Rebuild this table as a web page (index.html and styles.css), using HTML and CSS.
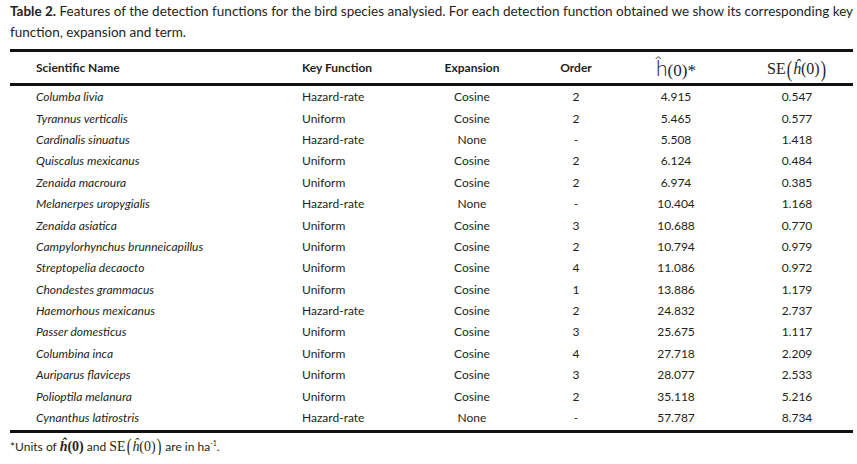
FILE: index.html
```html
<!DOCTYPE html>
<html>
<head>
<meta charset="utf-8">
<link rel="stylesheet" href="styles.css">
</head>
<body>
<div class="page">
  <p class="caption"><b>Table 2.</b> Features of the detection functions for the bird species analysied. For each detection function obtained we show its corresponding key function, expansion and term.</p>
  <div class="table">
    <div class="row head">
      <div class="c1">Scientific Name</div>
      <div class="c2">Key Function</div>
      <div class="c3">Expansion</div>
      <div class="c4">Order</div>
      <div class="c5"><span class="math-h"><span class="hs">ĥ</span><span class="serif">(0)*</span></span></div>
      <div class="c6"><span class="math-se"><span class="serif">SE</span><span class="bigp">(</span><span class="serif ital">ĥ</span><span class="serif">(0)</span><span class="bigp">)</span></span></div>
    </div>
    <div class="body">
      <div class="row"><div class="c1 it">Columba livia</div><div class="c2">Hazard-rate</div><div class="c3">Cosine</div><div class="c4">2</div><div class="c5">4.915</div><div class="c6">0.547</div></div>
      <div class="row"><div class="c1 it">Tyrannus verticalis</div><div class="c2">Uniform</div><div class="c3">Cosine</div><div class="c4">2</div><div class="c5">5.465</div><div class="c6">0.577</div></div>
      <div class="row"><div class="c1 it">Cardinalis sinuatus</div><div class="c2">Hazard-rate</div><div class="c3">None</div><div class="c4">-</div><div class="c5">5.508</div><div class="c6">1.418</div></div>
      <div class="row"><div class="c1 it">Quiscalus mexicanus</div><div class="c2">Uniform</div><div class="c3">Cosine</div><div class="c4">2</div><div class="c5">6.124</div><div class="c6">0.484</div></div>
      <div class="row"><div class="c1 it">Zenaida macroura</div><div class="c2">Uniform</div><div class="c3">Cosine</div><div class="c4">2</div><div class="c5">6.974</div><div class="c6">0.385</div></div>
      <div class="row"><div class="c1 it">Melanerpes uropygialis</div><div class="c2">Hazard-rate</div><div class="c3">None</div><div class="c4">-</div><div class="c5">10.404</div><div class="c6">1.168</div></div>
      <div class="row"><div class="c1 it">Zenaida asiatica</div><div class="c2">Uniform</div><div class="c3">Cosine</div><div class="c4">3</div><div class="c5">10.688</div><div class="c6">0.770</div></div>
      <div class="row"><div class="c1 it">Campylorhynchus brunneicapillus</div><div class="c2">Uniform</div><div class="c3">Cosine</div><div class="c4">2</div><div class="c5">10.794</div><div class="c6">0.979</div></div>
      <div class="row"><div class="c1 it">Streptopelia decaocto</div><div class="c2">Uniform</div><div class="c3">Cosine</div><div class="c4">4</div><div class="c5">11.086</div><div class="c6">0.972</div></div>
      <div class="row"><div class="c1 it">Chondestes grammacus</div><div class="c2">Uniform</div><div class="c3">Cosine</div><div class="c4">1</div><div class="c5">13.886</div><div class="c6">1.179</div></div>
      <div class="row"><div class="c1 it">Haemorhous mexicanus</div><div class="c2">Hazard-rate</div><div class="c3">Cosine</div><div class="c4">2</div><div class="c5">24.832</div><div class="c6">2.737</div></div>
      <div class="row"><div class="c1 it">Passer domesticus</div><div class="c2">Uniform</div><div class="c3">Cosine</div><div class="c4">3</div><div class="c5">25.675</div><div class="c6">1.117</div></div>
      <div class="row"><div class="c1 it">Columbina inca</div><div class="c2">Uniform</div><div class="c3">Cosine</div><div class="c4">4</div><div class="c5">27.718</div><div class="c6">2.209</div></div>
      <div class="row"><div class="c1 it">Auriparus flaviceps</div><div class="c2">Uniform</div><div class="c3">Cosine</div><div class="c4">3</div><div class="c5">28.077</div><div class="c6">2.533</div></div>
      <div class="row"><div class="c1 it">Polioptila melanura</div><div class="c2">Uniform</div><div class="c3">Cosine</div><div class="c4">2</div><div class="c5">35.118</div><div class="c6">5.216</div></div>
      <div class="row"><div class="c1 it">Cynanthus latirostris</div><div class="c2">Hazard-rate</div><div class="c3">None</div><div class="c4">-</div><div class="c5">57.787</div><div class="c6">8.734</div></div>
    </div>
  </div>
  <p class="note">*Units of <span class="serif bold ital">ĥ</span><span class="serif bold">(0)</span> and <span class="serif">SE</span><span class="bigp sm">(</span><span class="serif ital">ĥ</span><span class="serif">(0)</span><span class="bigp sm">)</span> are in ha<sup>-1</sup>.</p>
</div>
</body>
</html>
```
FILE: styles.css
```css
html, body {
  margin: 0;
  padding: 0;
  background: #ffffff;
}
body {
  font-family: Lato, "Open Sans", sans-serif;
  color: #231f20;
  font-size: 12px;
}
.page {
  padding: 1px 0 0 10px;
}
.caption {
  margin: 0;
  font-size: 13.5px;
  line-height: 21px;
}
.caption b {
  font-weight: 700;
}
.table {
  margin: 6px 4px 0 0;
  border-top: 3px solid #111;
  border-bottom: 3px solid #111;
}
.row {
  display: grid;
  grid-template-columns: 292px 130px 80px 128px 72px 1fr;
  align-items: center;
  height: 21.4px;
}
.row.head {
  height: 31px;
  border-bottom: 3px solid #111;
  font-weight: 700;
}
.body {
  padding-top: 0;
  padding-bottom: 2px;
}
.c1 {
  padding-left: 26px;
}
.c3, .c4, .c5 {
  text-align: center;
}
.c6 {
  text-align: center;
  padding-left: 29px;
}
.it {
  font-style: italic;
}
.serif {
  font-family: "Liberation Serif", "Times New Roman", serif;
  font-weight: 400;
}
.ital {
  font-style: italic;
}
.bold {
  font-weight: 700;
}
.math-h {
  font-weight: 400;
  white-space: nowrap;
}
.math-h .hs {
  font-family: Lato, sans-serif;
  font-size: 21px;
  font-weight: 300;
}
.math-h .serif {
  font-size: 17px;
}
.math-se {
  font-weight: 400;
  font-size: 16px;
  white-space: nowrap;
}
.bigp {
  display: inline-block;
  font-family: "Liberation Serif", serif;
  font-weight: 300;
  transform: scaleY(1.5);
  margin: 0 1px;
}
.note {
  margin: 6px 0 0 0;
  font-size: 12px;
}
.note .serif {
  font-size: 14px;
}
.bigp.sm {
  font-size: 14px;
}
.note sup {
  font-size: 7px;
}
```
